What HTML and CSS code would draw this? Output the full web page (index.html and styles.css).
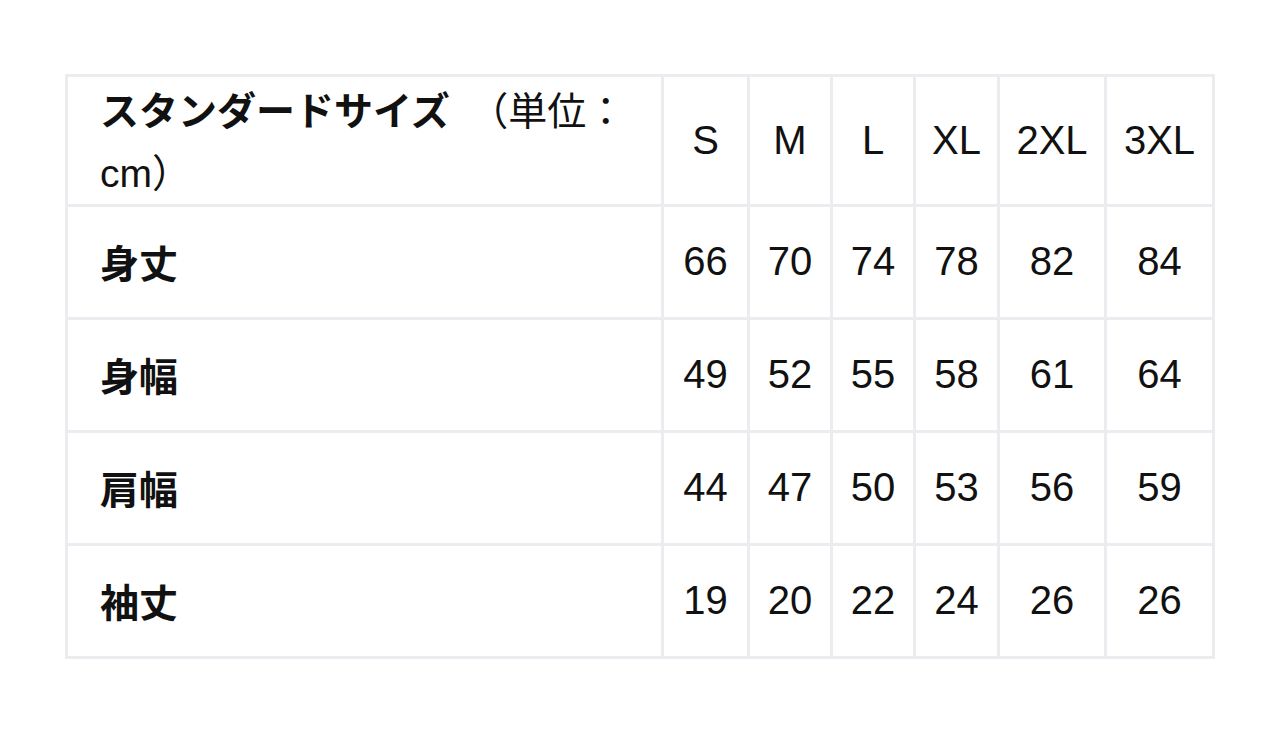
FILE: index.html
```html
<!DOCTYPE html>
<html lang="ja">
<head>
<meta charset="utf-8">
<title>サイズ表</title>
<link rel="stylesheet" href="styles.css">
</head>
<body>
<div class="size-table" role="table">
  <div class="cell label head-label" role="columnheader"><span class="bold">スタンダードサイズ</span>　（単位：<br>cm）</div>
  <div class="cell num" role="columnheader">S</div>
  <div class="cell num" role="columnheader">M</div>
  <div class="cell num" role="columnheader">L</div>
  <div class="cell num" role="columnheader">XL</div>
  <div class="cell num" role="columnheader">2XL</div>
  <div class="cell num" role="columnheader">3XL</div>

  <div class="cell label bold" role="rowheader">身丈</div>
  <div class="cell num">66</div>
  <div class="cell num">70</div>
  <div class="cell num">74</div>
  <div class="cell num">78</div>
  <div class="cell num">82</div>
  <div class="cell num">84</div>

  <div class="cell label bold" role="rowheader">身幅</div>
  <div class="cell num">49</div>
  <div class="cell num">52</div>
  <div class="cell num">55</div>
  <div class="cell num">58</div>
  <div class="cell num">61</div>
  <div class="cell num">64</div>

  <div class="cell label bold" role="rowheader">肩幅</div>
  <div class="cell num">44</div>
  <div class="cell num">47</div>
  <div class="cell num">50</div>
  <div class="cell num">53</div>
  <div class="cell num">56</div>
  <div class="cell num">59</div>

  <div class="cell label bold" role="rowheader">袖丈</div>
  <div class="cell num">19</div>
  <div class="cell num">20</div>
  <div class="cell num">22</div>
  <div class="cell num">24</div>
  <div class="cell num">26</div>
  <div class="cell num">26</div>
</div>
</body>
</html>
```

FILE: styles.css
```css
html, body {
  margin: 0;
  padding: 0;
  background: #ffffff;
}

body {
  font-family: "Liberation Sans", "Noto Sans CJK JP", sans-serif;
  color: #111111;
  padding: 74px 0 0 65px;
}

.size-table {
  display: grid;
  grid-template-columns: 593px 83px 80px 80px 81px 104px 105px;
  grid-template-rows: 127px 110px 110px 110px 110px;
  gap: 3px;
  padding: 3px;
  background: #ececf0;
  width: max-content;
}

.cell {
  background: #ffffff;
  display: flex;
  align-items: center;
  font-size: 39px;
  line-height: 63.5px;
}

.label {
  padding-left: 32px;
  font-family: "Noto Sans CJK JP", "Liberation Sans", sans-serif;
}

.head-label {
  display: block;
  font-family: "Liberation Sans", "Noto Sans CJK JP", sans-serif;
  font-size: 39px;
  line-height: 62px;
}

.head-label .bold {
  font-family: "Noto Sans CJK JP", sans-serif;
}

.bold {
  font-weight: 700;
}

.num {
  justify-content: center;
  font-size: 40px;
}
```
